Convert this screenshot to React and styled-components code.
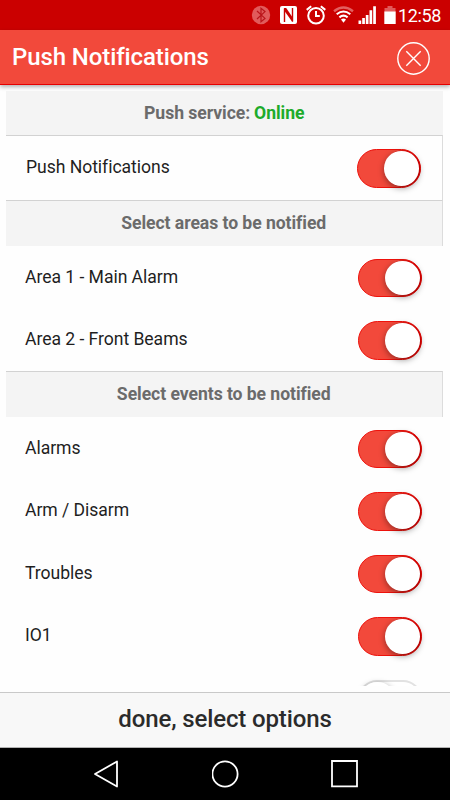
import React from "react";
import styled, { createGlobalStyle } from "styled-components";

const GlobalStyle = createGlobalStyle`
  * { box-sizing: border-box; }
  body { margin: 0; background: #fff; font-family: Roboto, "Liberation Sans", sans-serif; }
`;

const Screen = styled.div`
  display: flex;
  flex-direction: column;
  width: 450px;
  height: 800px;
  overflow: hidden;
  background: #fefefe;
`;

const StatusBar = styled.div`
  flex: none;
  display: flex;
  justify-content: flex-end;
  height: 30px;
  padding-right: 8px;
  background: #cb0000;
  color: #fff;
`;

const StatusIcons = styled.svg`
  width: 150px;
  height: 30px;
`;

const Clock = styled.span`
  width: 44px;
  font-size: 18px;
  line-height: 32px;
  letter-spacing: -0.35px;
  white-space: nowrap;
`;

const Header = styled.header`
  flex: none;
  display: flex;
  align-items: center;
  justify-content: space-between;
  height: 55px;
  padding: 3px 20px 0 12px;
  background: #f2493b;
  border-bottom: 1px solid #e60000;
  box-shadow: 0 2px 4px rgba(0, 0, 0, 0.3);
`;

const Title = styled.h1`
  margin: 0;
  padding-bottom: 4px;
  font-size: 24px;
  font-weight: 500;
  line-height: 28px;
  letter-spacing: -0.1px;
  color: #fff;
`;

const CloseButton = styled.button`
  display: flex;
  padding: 0;
  border: 0;
  background: none;
`;

const Content = styled.main`
  flex: none;
  height: 601px;
  padding: 6px 7.5px 0 6px;
  overflow: hidden;
`;

const Section = styled.h2`
  display: flex;
  justify-content: center;
  gap: 4px;
  height: ${(p) => p.$height}px;
  margin: 0;
  padding-top: ${(p) => p.$top}px;
  background: #f4f4f4;
  border-top: ${(p) => (p.$lined ? "1px solid #d2d2d2" : "0")};
  border-right: ${(p) => (p.$lined ? "1px solid #dcdcdc" : "0")};
  font-size: 17.6px;
  font-weight: 700;
  line-height: 22px;
  letter-spacing: -0.06px;
  color: #6b6b6b;
`;

const Online = styled.span`
  color: #1dab2b;
`;

const Row = styled.div`
  display: flex;
  align-items: flex-start;
  justify-content: space-between;
  height: ${(p) => (p.$boxed ? 65 : 62.5)}px;
  padding: ${(p) => (p.$boxed ? "13px 20.5px 0 20px" : "12.5px 20.5px 0 19px")};
  border-top: ${(p) => (p.$boxed ? "1px solid #d2d2d2" : "0")};
  border-right: ${(p) => (p.$boxed ? "1px solid #dcdcdc" : "0")};
`;

const Label = styled.span`
  padding-top: 8px;
  font-size: 17.6px;
  line-height: 21px;
  letter-spacing: -0.05px;
  color: #1f1f1f;
`;

const Track = styled.span`
  flex: none;
  display: flex;
  justify-content: ${(p) => (p.$on ? "flex-end" : "flex-start")};
  width: 64px;
  height: 38.5px;
  padding: ${(p) => (p.$on ? "1px 1.5px" : "0")};
  border: ${(p) => (p.$on ? "1px solid #ee120c" : "2px solid #e2e2e2")};
  border-radius: 20px;
  background: ${(p) => (p.$on ? "#f2493b" : "#fff")};
  box-shadow: ${(p) => (p.$on ? "inset -1.5px 0 0 0 #e60000" : "none")};
`;

const Knob = styled.span`
  width: 34.5px;
  height: 34.5px;
  border-radius: 50%;
  background: #fff;
  box-shadow: 0 2px 6px rgba(0, 0, 0, 0.4), 1px 0 0 0.5px ${(p) => (p.$on ? "#e60000" : "transparent")};
`;

const Footer = styled.footer`
  flex: none;
  margin-top: 6px;
  height: 56px;
  padding-top: 12px;
  background: #f8f8f8;
  border-top: 1px solid #c9c9c9;
  border-bottom: 1px solid #b2b2b2;
  font-size: 24px;
  font-weight: 500;
  line-height: 28px;
  letter-spacing: -0.13px;
  text-align: center;
  color: #2b2b2b;
`;

const NavBar = styled.nav`
  display: flex;
  flex: 1;
  gap: 91px;
  padding: 12px 0 0 93px;
  background: #000;
`;

const NavIcon = styled.svg`
  width: 28px;
  height: 28px;
  fill: none;
  stroke: #fff;
  stroke-width: 1.8;
`;

function Toggle({ on = true }) {
  return <Track $on={on}><Knob $on={on} /></Track>;
}

function Setting({ label, boxed, on = true }) {
  return (
    <Row $boxed={boxed}>
      <Label>{label}</Label>
      <Toggle on={on} />
    </Row>
  );
}

function Status() {
  return (
    <StatusIcons viewBox="248 0 150 30" fill="none">
      <circle cx="261" cy="15" r="9.2" fill="#e15b5b" />
      <path d="M257 11l8 7.4-4 3.4V8.2l4 3.4-8 7.4" stroke="#b9151a" strokeWidth="1.2" />
      <rect x="280" y="6" width="17" height="18" rx="2" fill="#fff" />
      <path d="M284.5 22V8.5M292.5 21.5V8" stroke="#cb0000" strokeWidth="1.4" />
      <path d="M284 8h2.2l6.8 10v3.5h-1L284.5 11z" fill="#cb0000" />
      <circle cx="316" cy="15.7" r="7.8" stroke="#fff" strokeWidth="2" />
      <path d="M306.7 9.9l4.5-3.6M320.8 6.3l4.5 3.6M316 11v5h3.8" stroke="#fff" strokeWidth="2" />
      <path d="M334 11.2q9.5-7.2 19 0" stroke="#e26060" strokeWidth="2.4" />
      <path d="M336.7 14.2q6.8-5.4 13.6 0M339.4 17.4q4.1-3.5 8.2 0" stroke="#fff" strokeWidth="2.1" />
      <path d="M341 19.5q2.5-2 5 0l-2.5 3.2z" fill="#fff" />
      <path d="M358.5 20.5h2.7V24h-2.7zM362.2 18h2.7v6h-2.7zM365.8 15h2.7v9h-2.7zM369.5 10.3h2.7V24h-2.7zM373.2 6.2h2.7V24h-2.7z" fill="#fff" />
      <path d="M387.5 6h5v2h3v4h-11V8h3z" fill="#e15b5b" />
      <path d="M384.3 11.5h11.4V24h-11.4z" fill="#fff" />
    </StatusIcons>
  );
}

export default function App() {
  return (
    <>
      <GlobalStyle />
      <Screen>
        <StatusBar>
          <Status />
          <Clock>12:58</Clock>
        </StatusBar>
        <Header>
          <Title>Push Notifications</Title>
          <CloseButton aria-label="Close">
            <svg width="33" height="33" viewBox="0 0 33 33" fill="none" stroke="#fff" strokeWidth="1.4">
              <circle cx="16.5" cy="16.5" r="15.7" />
              <path d="M9.3 9.3l14.4 14.4M23.7 9.3L9.3 23.7" />
            </svg>
          </CloseButton>
        </Header>
        <Content>
          <Section $height={44} $top={11}><span>Push service:</span><Online>Online</Online></Section>
          <Setting label="Push Notifications" boxed />
          <Section $height={46} $top={11} $lined>Select areas to be notified</Section>
          <Setting label="Area 1 - Main Alarm" />
          <Setting label="Area 2 - Front Beams" />
          <Section $height={46} $top={11} $lined>Select events to be notified</Section>
          <Setting label="Alarms" />
          <Setting label="Arm / Disarm" />
          <Setting label="Troubles" />
          <Setting label="IO1" />
          <Setting label="" on={false} />
        </Content>
        <Footer>done, select options</Footer>
        <NavBar>
          <NavIcon viewBox="0 0 28 28"><path d="M2 14L24 1.5v25z" strokeLinejoin="round" /></NavIcon>
          <NavIcon viewBox="0 0 28 28"><circle cx="13" cy="14" r="12.6" /></NavIcon>
          <NavIcon viewBox="0 0 28 28"><path d="M1 1h25v25.4H1z" /></NavIcon>
        </NavBar>
      </Screen>
    </>
  );
}
